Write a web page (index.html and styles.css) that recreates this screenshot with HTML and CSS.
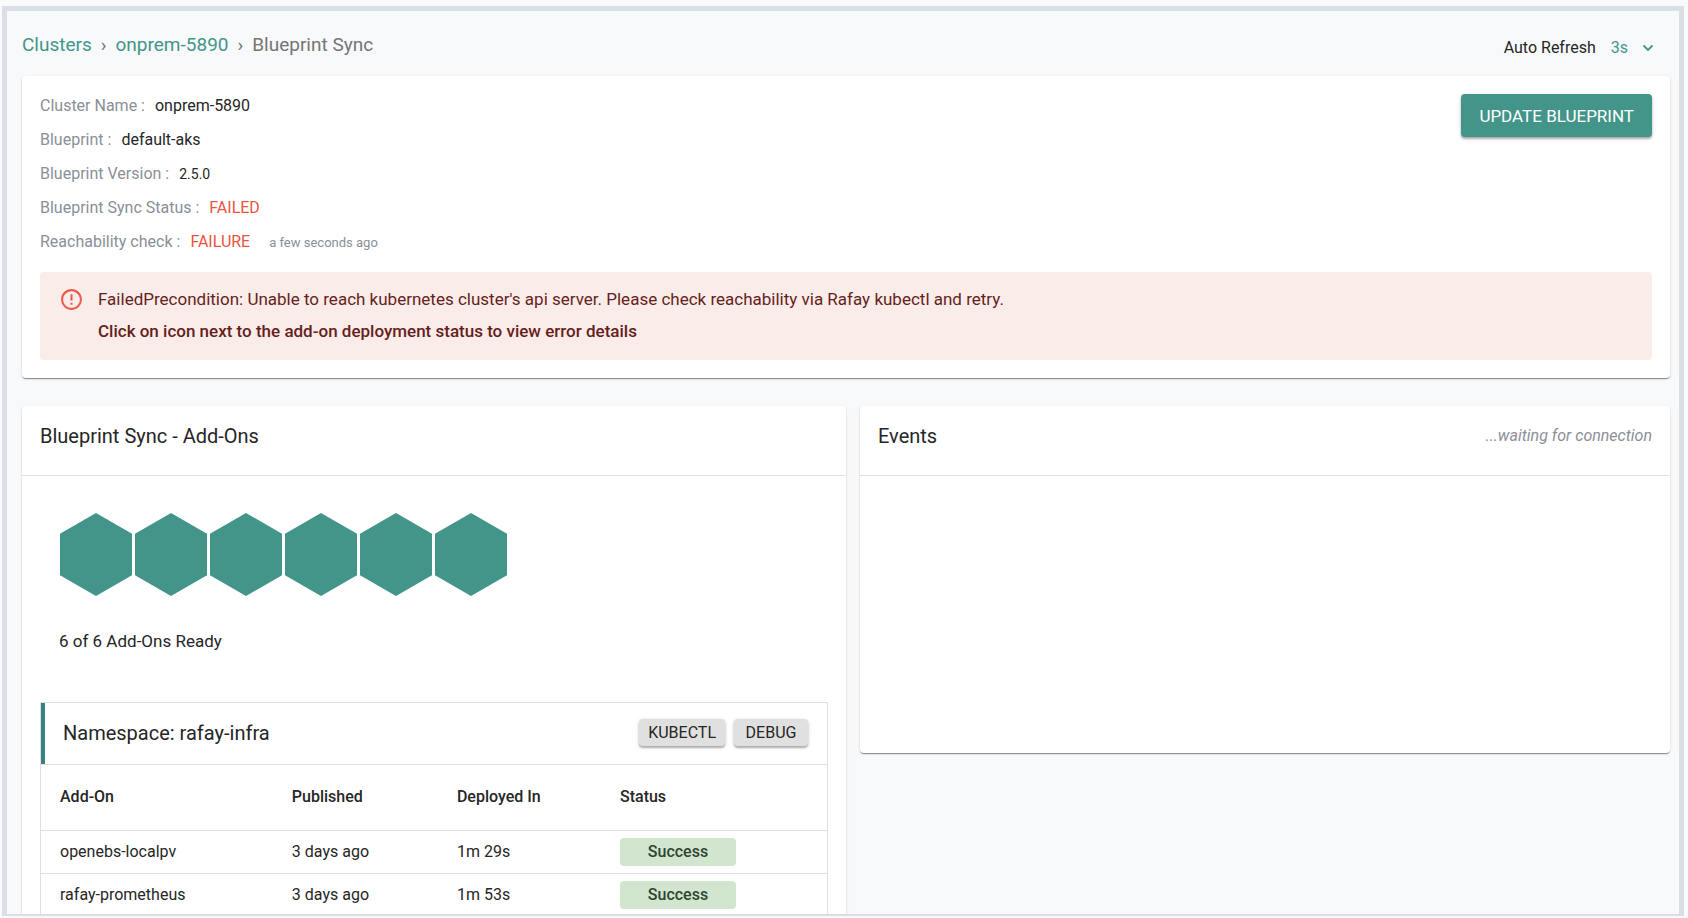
FILE: index.html
```html
<!DOCTYPE html>
<html lang="en">
<head>
<meta charset="utf-8">
<title>Blueprint Sync</title>
<link rel="stylesheet" href="styles.css">
</head>
<body>
<main class="frame">
  <header class="topbar">
    <nav class="crumbs" aria-label="Breadcrumb">
      <a href="#">Clusters</a>
      <span class="sep">›</span>
      <a href="#">onprem-5890</a>
      <span class="sep">›</span>
      <span class="current">Blueprint Sync</span>
    </nav>
    <div class="refresh">
      <span>Auto Refresh</span>
      <button type="button" class="interval" aria-label="Auto refresh interval">3s
        <svg class="chevron" viewBox="0 0 12 8" aria-hidden="true"><path d="M1.5 1.5 6 6l4.500-4.500" fill="none" stroke="currentColor" stroke-width="1.800"/></svg>
      </button>
    </div>
  </header>

  <section class="card summary">
    <div class="summary-top">
      <dl class="facts">
        <div><dt>Cluster Name :</dt><dd>onprem-5890</dd></div>
        <div><dt>Blueprint :</dt><dd>default-aks</dd></div>
        <div><dt>Blueprint Version :</dt><dd class="version">2.5.0</dd></div>
        <div><dt>Blueprint Sync Status :</dt><dd class="bad">FAILED</dd></div>
        <div><dt>Reachability check :</dt><dd class="bad">FAILURE</dd><dd class="when">a few seconds ago</dd></div>
      </dl>
      <button type="button" class="btn primary">UPDATE BLUEPRINT</button>
    </div>
    <div class="alert" role="alert">
      <svg class="alert-icon" viewBox="0 0 24 24" aria-hidden="true"><path fill="currentColor" d="M11 15h2v2h-2zm0-8h2v6h-2zm.99-5C6.470 2 2 6.480 2 12s4.470 10 9.990 10C17.520 22 22 17.520 22 12S17.520 2 11.990 2zM12 20c-4.420 0-8-3.580-8-8s3.580-8 8-8 8 3.580 8 8-3.580 8-8 8z"/></svg>
      <div class="alert-text">
        <p>FailedPrecondition: Unable to reach kubernetes cluster's api server. Please check reachability via Rafay kubectl and retry.</p>
        <p class="strong">Click on icon next to the add-on deployment status to view error details</p>
      </div>
    </div>
  </section>

  <div class="columns">
    <section class="card addons">
      <div class="card-head"><h2>Blueprint Sync - Add-Ons</h2></div>
      <div class="addons-body">
        <div class="hexes" aria-hidden="true">
          <span class="hex"></span><span class="hex"></span><span class="hex"></span><span class="hex"></span><span class="hex"></span><span class="hex"></span>
        </div>
        <p class="ready">6 of 6 Add-Ons Ready</p>
        <div class="namespace">
          <div class="ns-head">
            <h3>Namespace: rafay-infra</h3>
            <div class="ns-actions">
              <button type="button" class="btn small">KUBECTL</button>
              <button type="button" class="btn small">DEBUG</button>
            </div>
          </div>
          <table>
            <colgroup><col class="c-name"><col class="c-pub"><col class="c-dep"><col></colgroup>
            <thead>
              <tr><th scope="col">Add-On</th><th scope="col">Published</th><th scope="col">Deployed In</th><th scope="col">Status</th></tr>
            </thead>
            <tbody>
              <tr><td>openebs-localpv</td><td>3 days ago</td><td>1m 29s</td><td><span class="badge">Success</span></td></tr>
              <tr><td>rafay-prometheus</td><td>3 days ago</td><td>1m 53s</td><td><span class="badge">Success</span></td></tr>
            </tbody>
          </table>
        </div>
      </div>
    </section>
    <section class="card events">
      <div class="card-head"><h2>Events</h2><em>...waiting for connection</em></div>
      <div class="events-body"></div>
    </section>
  </div>
</main>
</body>
</html>
```
FILE: styles.css
```css
* { box-sizing: border-box; }

body {
  margin: 0;
  height: 100vh;
  padding: 6px 4px 2px 2px;
  overflow: hidden;
  background: #f8fafc;
  color: #262626;
  font: 16px/24px Roboto, sans-serif;
}

h2, h3, p, dl, dd { margin: 0; }
h2, h3 { font-size: 20px; line-height: 28px; font-weight: 400; }
a { color: #43958a; text-decoration: none; }
button { font-family: inherit; cursor: pointer; border: 0; }

.frame {
  height: 100%;
  overflow: hidden;
  padding: 0 9px 0 15px;
  border: 5px solid #d9dfe5;
  border-bottom-width: 2px;
  background: #f8f9fb;
}

.topbar {
  display: flex;
  justify-content: space-between;
  height: 65px;
  padding: 20px 16px 0 0;
}
.crumbs { display: flex; gap: 9px; font-size: 19px; line-height: 28px; }
.sep, .current { color: #757575; }
.refresh { display: flex; gap: 15px; padding-top: 5px; }
.interval {
  display: flex;
  align-items: center;
  gap: 14px;
  height: 24px;
  padding: 0;
  background: none;
  color: #43958a;
  font-size: 16px;
  line-height: 24px;
}
.chevron { width: 12px; height: 8px; }

.card {
  background: #fff;
  border-radius: 4px;
  box-shadow: 0 2px 1px -1px rgba(0, 0, 0, .25), 0 1px 1px rgba(0, 0, 0, .2), 0 1px 3px rgba(0, 0, 0, .12);
}

.summary { padding: 13px 18px 18px; }
.summary-top { display: flex; justify-content: space-between; align-items: flex-start; }
.facts { padding-bottom: 12px; }
.facts div { display: flex; align-items: baseline; gap: 10px; line-height: 34px; }
.facts dt { color: #8a8f98; }
.facts .version { font-size: 14px; }
.facts .bad { color: #e9543f; }
.facts .when { padding-left: 9px; font-size: 13px; color: #8a8f98; }

.btn {
  border-radius: 4px;
  box-shadow: 0 2px 2px rgba(0, 0, 0, .25), 0 1px 4px rgba(0, 0, 0, .15);
}
.primary {
  height: 43px;
  margin-top: 5px;
  padding: 0 18px;
  background: #43958a;
  color: #fff;
  font-size: 17px;
}
.small {
  min-width: 74px;
  height: 27px;
  padding: 0 9px;
  background: #e0e0e0;
  color: #262626;
  font-size: 16px;
}

.alert {
  display: flex;
  gap: 14px;
  padding: 11px 19px 13px;
  border-radius: 4px;
  background: #faece9;
  color: #651f1c;
  font-size: 17px;
}
.alert-icon { flex: none; width: 25px; height: 25px; margin-top: 4px; color: #ea5b4c; }
.alert-text p { line-height: 32px; }
.alert-text .strong { font-weight: 500; }

.columns {
  display: grid;
  grid-template-columns: 824fr 810fr;
  align-items: start;
  gap: 14px;
  margin-top: 28px;
}
.card-head {
  display: flex;
  justify-content: space-between;
  align-items: center;
  padding: 16px 18px 25px;
  border-bottom: 1px solid #e0e0e0;
}
.card-head em { color: #8a8f98; }
.events-body { height: 277px; }

.addons-body { padding: 37px 18px 40px; }
.hexes { display: flex; gap: 3px; padding-left: 20px; }
.hex {
  width: 72px;
  height: 83px;
  background: #43958a;
  clip-path: polygon(50% 0, 100% 25%, 100% 75%, 50% 100%, 0 75%, 0 25%);
}
.ready { padding: 33px 0 49px 19px; font-size: 17px; }

.namespace { border: 1px solid #e0e0e0; }
.ns-head {
  display: flex;
  justify-content: space-between;
  align-items: center;
  height: 61px;
  padding: 0 19px 2px 18px;
  border-left: 4px solid #35827f;
}
.ns-actions { display: flex; gap: 9px; }

table { width: 100%; table-layout: fixed; border-collapse: collapse; }
.c-name { width: 29.500%; }
.c-pub { width: 21%; }
.c-dep { width: 20.750%; }
th, td { padding: 0 0 0 19px; text-align: left; border-top: 1px solid #e0e0e0; }
th { height: 66px; padding-bottom: 2px; font-weight: 500; }
td { height: 43px; }
.badge {
  display: block;
  width: 116px;
  border-radius: 4px;
  background: #d1e5cf;
  color: #2f4430;
  font-weight: 500;
  line-height: 28px;
  text-align: center;
}
```
